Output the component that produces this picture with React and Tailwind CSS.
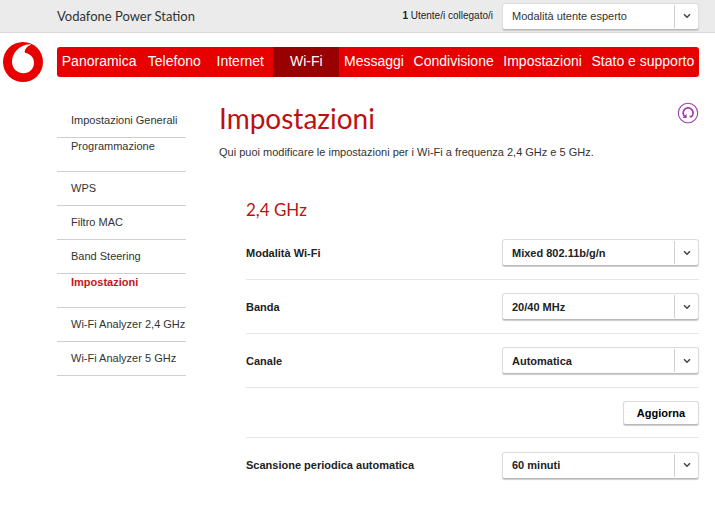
import { useState } from "react";
import clsx from "clsx";

const NAV = ["Panoramica", "Telefono", "Internet", "Wi-Fi", "Messaggi", "Condivisione", "Impostazioni", "Stato e supporto"];

const SIDE = [
  { label: "Impostazioni Generali" },
  { label: "Programmazione", group: true },
  { label: "WPS" },
  { label: "Filtro MAC" },
  { label: "Band Steering" },
  { label: "Impostazioni", group: true, active: true },
  { label: "Wi-Fi Analyzer 2,4 GHz" },
  { label: "Wi-Fi Analyzer 5 GHz" },
];

const MODES = ["Mixed 802.11b/g/n", "802.11b", "802.11g", "802.11n"];
const BANDS = ["20/40 MHz", "20 MHz"];
const CHANNELS = ["Automatica", "1", "6", "11"];
const SCANS = ["60 minuti", "30 minuti", "120 minuti"];

function Logo() {
  return (
    <svg viewBox="0 0 40 40" className="block h-10 w-10" aria-hidden="true">
      <circle cx="20" cy="20" r="20" fill="#e60000" />
      <path
        d="M20.4 31.2C14.2 31.3 8.9 26.6 9 19.6C9.1 11 16 3 27 2.2C27.8 2.1 28.2 2.6 27.6 2.9C23.6 4.3 21.6 7.4 21.7 10.6C27.5 12 31 15.6 31 20.7C31 26.8 26.5 31.1 20.4 31.2Z"
        fill="#fff"
      />
    </svg>
  );
}

function ResetIcon() {
  return (
    <svg viewBox="0 0 22 22" className="block h-[22px] w-[22px]" fill="none" stroke="#a03cab" aria-hidden="true">
      <circle cx="11" cy="11" r="9.7" strokeWidth="1.1" />
      <path d="M7.6 14.5A5 5 0 1 1 14.4 14.7H12.6" strokeWidth="1.7" />
      <path d="M5.4 15.9H9.6V12Z" fill="#a03cab" stroke="none" />
    </svg>
  );
}

function Dropdown({ id, label, options, className }) {
  const [value, setValue] = useState(options[0]);

  return (
    <div className="relative h-[27px] w-[197px] shrink-0 rounded-[3px] border border-[#dcdcdc] border-b-[#b8b8b8] bg-white shadow-[0_1px_1px_#cccccc]">
      <select
        id={id}
        aria-label={label}
        value={value}
        onChange={(e) => setValue(e.target.value)}
        className={clsx("block h-full w-full appearance-none bg-transparent pr-7 pl-[9px] text-[11px] outline-none", className)}
      >
        {options.map((o) => <option key={o}>{o}</option>)}
      </select>
      <span className="pointer-events-none absolute inset-y-px right-0 flex w-6 items-center justify-center border-l border-[#d0d0d0]">
        <svg viewBox="0 0 8 6" className="h-[6px] w-2" fill="none" stroke="#444" strokeWidth="1.5" aria-hidden="true">
          <path d="M1 1.2L4 4.2L7 1.2" />
        </svg>
      </span>
    </div>
  );
}

function Row({ id, label, options }) {
  return (
    <div className="flex h-[54px] items-center justify-between border-b border-[#e6e6e6] last:border-b-0">
      <label htmlFor={id} className="font-bold">{label}</label>
      <Dropdown id={id} options={options} className="font-bold" />
    </div>
  );
}

export default function App() {
  return (
    <div className="bg-white font-['Liberation_Sans',Arial,sans-serif] text-[11px] leading-4 text-[#333]">
      <header className="flex h-[33px] items-center justify-between border-b border-[#dadada] bg-[#ebebeb] pr-4 pl-[57px]">
        <span className="font-['Lato',sans-serif] text-[13px]">Vodafone Power Station</span>
        <div className="flex items-center gap-[9px]">
          <span className="text-[10px] text-[#222]"><b>1</b> Utente/i collegato/i</span>
          <Dropdown id="mode" label="Modalità utente" options={["Modalità utente esperto", "Modalità utente base"]} />
        </div>
      </header>

      <div className="flex items-center gap-[14px] pt-[9px] pr-4 pl-[3px]">
        <a href="#" aria-label="Vodafone"><Logo /></a>
        <nav className="flex h-[30px] flex-1 overflow-hidden rounded-[3px] bg-[#e60000] text-[14px] text-white">
          {NAV.map((item) => (
            <a
              key={item}
              href="#"
              className={clsx(
                "flex min-w-[66px] flex-auto items-center justify-center pb-0.5 whitespace-nowrap",
                item === "Wi-Fi" && "bg-[#990000]"
              )}
            >
              {item}
            </a>
          ))}
        </nav>
      </div>

      <div className="flex gap-[33px] pr-4 pl-[57px]">
        <ul className="mt-[22px] w-[129px] shrink-0">
          {SIDE.map(({ label, group, active }) => (
            <li key={label} className={clsx("h-[34px] border-b border-[#cfcfcf] pl-[14px]", group ? "pt-0" : "pt-2")}>
              <a href="#" className={clsx("whitespace-nowrap", active && "font-bold text-[#c4161c]")}>{label}</a>
            </li>
          ))}
        </ul>

        <main className="min-w-0 flex-1 pt-5">
          <div className="flex items-start justify-between">
            <h1 className="font-['Lato',sans-serif] text-[28px] leading-8 text-[#bd1111]">Impostazioni</h1>
            <button type="button" aria-label="Ripristina" className="cursor-pointer"><ResetIcon /></button>
          </div>
          <p className="mt-[10px]">Qui puoi modificare le impostazioni per i Wi-Fi a frequenza 2,4 GHz e 5 GHz.</p>

          <section className="mt-[38px] pl-[27px] text-[#222]">
            <h2 className="mb-1 font-['Lato',sans-serif] text-[17px] leading-6 text-[#bd1111]">2,4 GHz</h2>
            <Row id="wifi-mode" label="Modalità Wi-Fi" options={MODES} />
            <Row id="band" label="Banda" options={BANDS} />
            <Row id="channel" label="Canale" options={CHANNELS} />
            <div className="flex h-[50px] items-center justify-end border-b border-[#e6e6e6]">
              <button
                type="button"
                className="h-6 w-[76px] cursor-pointer rounded-[3px] border border-[#dcdcdc] border-b-[#b8b8b8] bg-white font-bold text-black shadow-[0_1px_1px_#cccccc]"
              >
                Aggiorna
              </button>
            </div>
            <Row id="scan" label="Scansione periodica automatica" options={SCANS} />
          </section>
        </main>
      </div>
    </div>
  );
}
